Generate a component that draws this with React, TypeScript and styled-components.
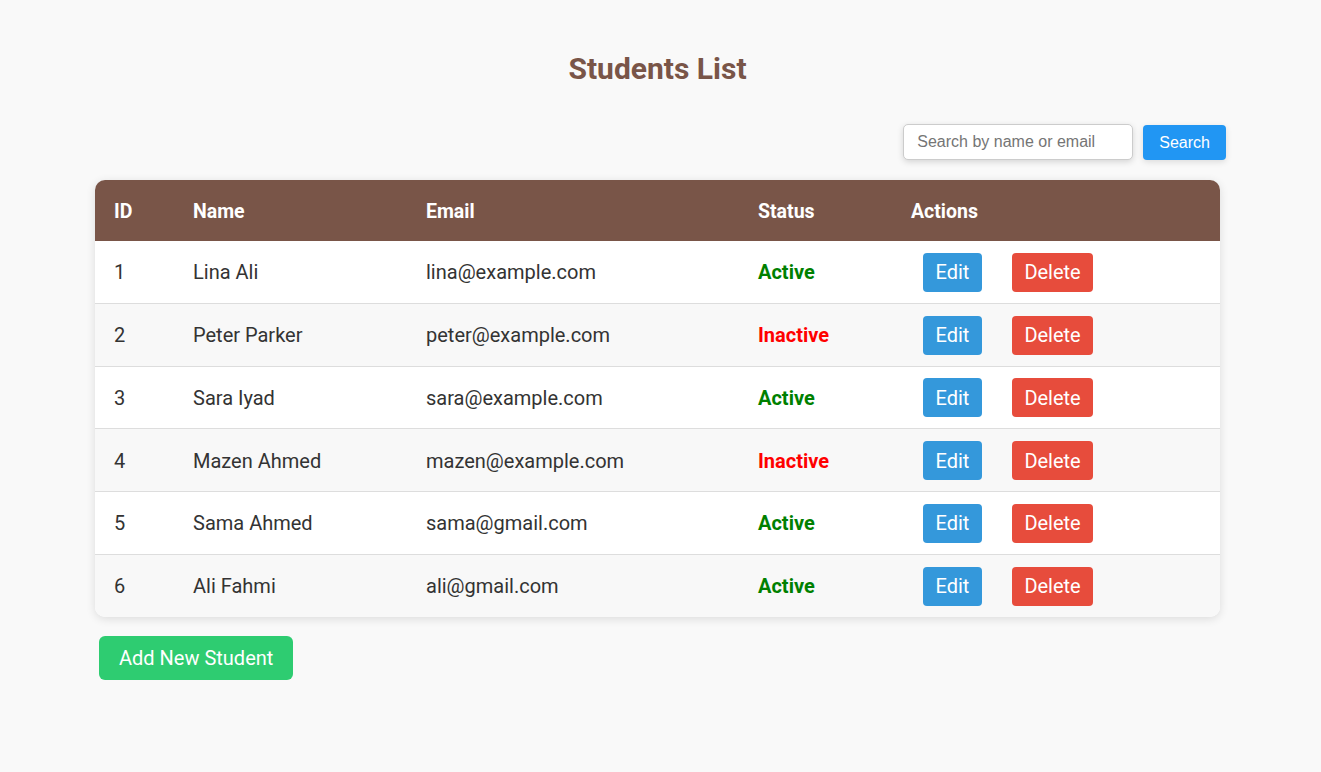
import React from "react";
import styled, { createGlobalStyle } from "styled-components";

const Global = createGlobalStyle`
  body {
    margin: 0;
    background: #f9f9f9;
    font-family: Roboto, "Noto Sans", sans-serif;
    color: #333;
  }
`;

const Page = styled.div`
  width: 1125px;
  margin: 0 auto;
  padding: 49px 0 40px;
  transform: translateX(-3px);
`;

const Title = styled.h1`
  margin: 0 0 35px;
  text-align: center;
  font-size: 30px;
  font-weight: 700;
  color: #795548;
  line-height: 40px;
`;

const SearchBar = styled.div`
  display: flex;
  justify-content: flex-end;
  gap: 10px;
  margin: 0 -6px 20px 0;
`;

const SearchInput = styled.input`
  width: 230px;
  height: 36px;
  box-sizing: border-box;
  padding: 0 13px;
  border: 1px solid #ccc;
  border-radius: 5px;
  font-family: "Liberation Sans", Arial, sans-serif;
  font-size: 16px;
  color: #333;
  box-shadow: 0 2px 6px rgba(0, 0, 0, 0.15);
  &::placeholder {
    color: #757575;
  }
`;

const SearchButton = styled.button`
  height: 35px;
  margin-top: 1px;
  padding: 0 16px;
  border: none;
  border-radius: 4px;
  background: #2196f3;
  color: #fff;
  font-family: "Liberation Sans", Arial, sans-serif;
  font-size: 16px;
  box-shadow: 0 2px 6px rgba(0, 0, 0, 0.12);
`;

const Card = styled.div`
  background: #fff;
  border-radius: 10px;
  overflow: hidden;
  box-shadow: 0 2px 10px rgba(0, 0, 0, 0.12);
`;

const Table = styled.table`
  width: 100%;
  border-collapse: collapse;
  table-layout: fixed;
`;

const Th = styled.th<{ $w: number }>`
  box-sizing: border-box;
  width: ${(p) => p.$w}px;
  height: 61px;
  padding: 2px 19px 0;
  background: #795548;
  color: #fff;
  text-align: left;
  font-size: 19.5px;
  font-weight: 700;
`;

const Tr = styled.tr<{ $alt: boolean }>`
  background: ${(p) => (p.$alt ? "#f8f8f8" : "#fff")};
  border-top: 1px solid #ddd;
  &:first-child {
    border-top: none;
  }
`;

const Td = styled.td`
  height: 60.75px;
  padding: 1px 19px 0;
  font-size: 20px;
  color: #333;
`;

const Status = styled.span<{ $active: boolean }>`
  font-weight: 700;
  color: ${(p) => (p.$active ? "#008000" : "#ff0000")};
`;

const Actions = styled.div`
  display: flex;
  gap: 30px;
  padding-left: 12px;
`;

const ActionButton = styled.button<{ $kind: "edit" | "delete" }>`
  height: 39px;
  padding: 0 12.5px;
  border: none;
  border-radius: 4px;
  background: ${(p) => (p.$kind === "edit" ? "#3498db" : "#e74c3c")};
  color: #fff;
  font-family: Roboto, sans-serif;
  font-size: 20px;
`;

const AddButton = styled.button`
  margin: 19px 0 0 4px;
  height: 44px;
  padding: 0 20px;
  border: none;
  border-radius: 6px;
  background: #2ecc71;
  color: #fff;
  font-family: Roboto, sans-serif;
  font-size: 20px;
`;

const students = [
  { id: 1, name: "Lina Ali", email: "lina@example.com", active: true },
  { id: 2, name: "Peter Parker", email: "peter@example.com", active: false },
  { id: 3, name: "Sara Iyad", email: "sara@example.com", active: true },
  { id: 4, name: "Mazen Ahmed", email: "mazen@example.com", active: false },
  { id: 5, name: "Sama Ahmed", email: "sama@gmail.com", active: true },
  { id: 6, name: "Ali Fahmi", email: "ali@gmail.com", active: true },
];

export default function App() {
  return (
    <>
      <Global />
      <Page>
        <Title>Students List</Title>
        <SearchBar>
          <SearchInput placeholder="Search by name or email" />
          <SearchButton>Search</SearchButton>
        </SearchBar>
        <Card>
          <Table>
            <thead>
              <tr>
                <Th $w={79}>ID</Th>
                <Th $w={233}>Name</Th>
                <Th $w={332}>Email</Th>
                <Th $w={153}>Status</Th>
                <Th $w={328}>Actions</Th>
              </tr>
            </thead>
            <tbody>
              {students.map((s, i) => (
                <Tr key={s.id} $alt={i % 2 === 1}>
                  <Td>{s.id}</Td>
                  <Td>{s.name}</Td>
                  <Td>{s.email}</Td>
                  <Td>
                    <Status $active={s.active}>{s.active ? "Active" : "Inactive"}</Status>
                  </Td>
                  <Td>
                    <Actions>
                      <ActionButton $kind="edit">Edit</ActionButton>
                      <ActionButton $kind="delete">Delete</ActionButton>
                    </Actions>
                  </Td>
                </Tr>
              ))}
            </tbody>
          </Table>
        </Card>
        <AddButton>Add New Student</AddButton>
      </Page>
    </>
  );
}
